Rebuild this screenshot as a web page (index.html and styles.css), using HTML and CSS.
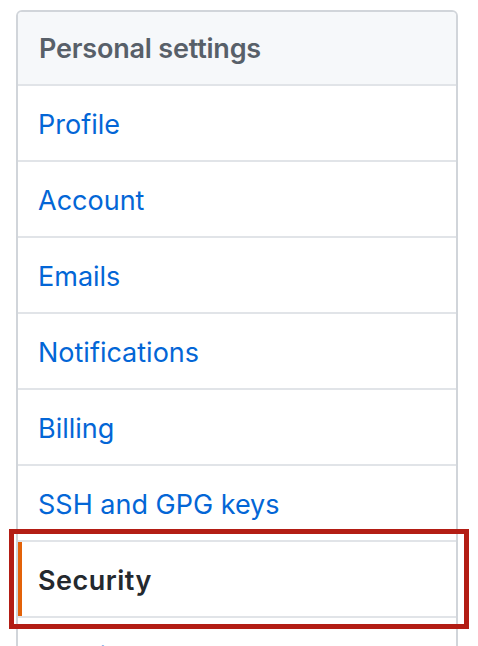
FILE: index.html
```html
<!DOCTYPE html>
<html>
<head>
<meta charset="utf-8">
<link rel="stylesheet" href="styles.css">
</head>
<body>
<nav class="menu">
  <h3 class="menu-heading">Personal settings</h3>
  <a class="menu-item" href="#">Profile</a>
  <a class="menu-item" href="#">Account</a>
  <a class="menu-item" href="#">Emails</a>
  <a class="menu-item" href="#">Notifications</a>
  <a class="menu-item" href="#">Billing</a>
  <a class="menu-item" href="#">SSH and GPG keys</a>
  <a class="menu-item selected" href="#">Security</a>
  <a class="menu-item" href="#">Sessions</a>
  <div class="highlight"></div>
</nav>
</body>
</html>
```
FILE: styles.css
```css
html, body {
  margin: 0;
  padding: 0;
  background: #ffffff;
  height: 646px;
  overflow: hidden;
}
body {
  font-family: Inter, "Noto Sans", "Liberation Sans", sans-serif;
  padding: 10px 0 0 16px;
}
.menu {
  position: relative;
  width: 442px;
  box-sizing: border-box;
  border: 2px solid #d1d5da;
  border-radius: 6px;
  display: flex;
  flex-direction: column;
}
.menu-heading {
  margin: 0;
  height: 74px;
  box-sizing: border-box;
  display: flex;
  align-items: center;
  padding-left: 21px;
  background: #f6f8fa;
  border-bottom: 2px solid #e1e4e8;
  border-radius: 4px 4px 0 0;
  color: #586069;
  font-size: 27px;
  font-weight: 600;
  letter-spacing: -0.2px;
}
.menu-item {
  position: relative;
  height: 76px;
  box-sizing: border-box;
  display: flex;
  align-items: center;
  padding-left: 20px;
  padding-top: 2px;
  border-bottom: 2px solid #e1e4e8;
  color: #0366d6;
  font-size: 27px;
  text-decoration: none;
}
.menu-item.selected {
  color: #24292e;
  font-weight: 600;
  letter-spacing: 0.5px;
}
.menu-item.selected::before {
  content: "";
  position: absolute;
  left: 0;
  top: 0;
  bottom: 0;
  width: 4px;
  background: #e36209;
}
.highlight {
  position: absolute;
  left: -9px;
  top: 517px;
  width: 460px;
  height: 100px;
  box-sizing: border-box;
  border: 5px solid #b31d14;
}
```
